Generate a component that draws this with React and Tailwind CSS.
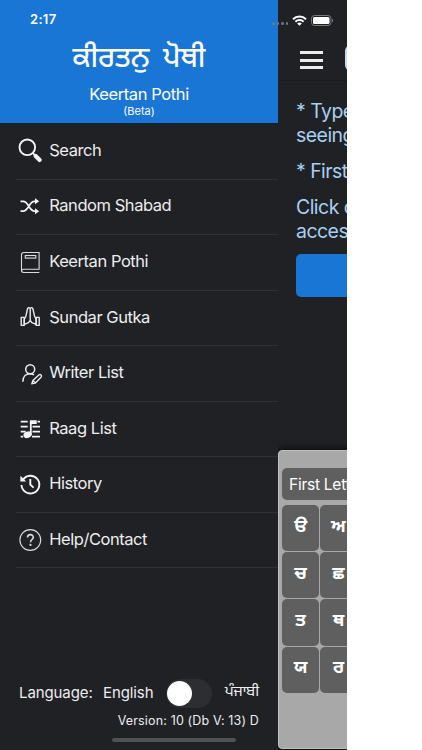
const GUR = "font-['Noto_Sans_Gurmukhi','Noto_Sans','Lohit_Gurmukhi',sans-serif]";

function SearchIcon() {
  return (
    <svg width="26" height="26" viewBox="0 0 26 26" fill="none" stroke="#f4f4f5">
      <circle cx="9.300" cy="9.300" r="7.800" strokeWidth="1.900" />
      <path d="M14.700 14.900l2.400 2.400" strokeWidth="1.800" />
      <path d="M17.600 17.900l4.100 4" strokeWidth="4.200" strokeLinecap="round" />
    </svg>
  );
}
function ShuffleIcon() {
  return (
    <svg width="26" height="26" viewBox="0 0 26 26" fill="none" stroke="#f4f4f5" strokeWidth="1.700">
      <path d="M2.500 8.300h2.600c5.600 0 5.800 9.800 11.400 9.800h1.500M2.500 18.100h2.600c5.600 0 5.800-9.800 11.400-9.800h1.500" />
      <path d="M17 5.200v6l4.200-3zM17 15.200v6l4.200-3z" fill="#f4f4f5" stroke="none" />
    </svg>
  );
}
function BookIcon() {
  return (
    <svg width="26" height="26" viewBox="0 0 26 26" fill="none" stroke="#dcdcde" strokeWidth="1.100">
      <path d="M21.300 23.500H5.800c-3 0-3-3.300 0-3.300h15.300V3.500H5.800c-1.500 0-2.300.8-2.300 2.200V22" />
      <rect x="7.300" y="6.500" width="10.500" height="2.600" />
    </svg>
  );
}
function PrayIcon() {
  return (
    <svg width="26" height="26" viewBox="0 0 26 26" fill="none" stroke="#ececee" strokeWidth="1.400" strokeLinejoin="round">
      <path d="M12.200 4.300c-1.600-1.500-2.600-.2-2.900 1.300L8 11.700l-1.700 3.600v5l4.200-1.600 1.700-2.300zM12.200 4.300c1.600-1.500 2.600-.2 2.900 1.300l1.300 6.100 1.700 3.600v5l-4.200-1.600-1.700-2.300z" />
      <rect x="3.200" y="13.400" width="3" height="8" />
      <rect x="18.200" y="13.400" width="3" height="8" />
    </svg>
  );
}
function WriterIcon() {
  return (
    <svg width="26" height="26" viewBox="0 0 26 26" fill="none" stroke="#ececee" strokeWidth="1.500" strokeLinecap="round" strokeLinejoin="round">
      <circle cx="12.200" cy="9.200" r="4.500" />
      <path d="M4.900 21.300c0-4.800 3-7.600 7-7.600 1.400 0 2.600.3 3.600.9" />
      <path d="M14.900 20.500l5.900-5.500c1.700-1.300 3.600.7 2.200 2.200l-5.600 5.700-3.600 1zM14.900 20.500l2.500 2.400" strokeWidth="1.400" />
    </svg>
  );
}
function RaagIcon() {
  return (
    <svg width="26" height="26" viewBox="0 0 26 26" fill="none" stroke="#f4f4f5" strokeWidth="1.700">
      <path d="M2.700 5.700h7M19.500 5.700h2.500M2.700 10.600h7M14.500 10.600h7.500M2.700 15.600h5M14.500 15.600h7.500M2.700 20.700h2.500M14 20.700h8" />
      <path d="M12.800 19V5.500" strokeWidth="1.800" />
      <path d="M11.900 4.200h6.800v3.700h-6.800z" fill="#f4f4f5" stroke="none" />
      <ellipse cx="9.600" cy="18.800" rx="4.200" ry="3.200" transform="rotate(-20 9.600 18.800)" fill="#f4f4f5" stroke="none" />
    </svg>
  );
}
function HistoryIcon() {
  return (
    <svg width="26" height="26" viewBox="0 0 26 26" fill="none" stroke="#f4f4f5" strokeWidth="1.900">
      <path d="M4.900 8.800A8.900 8.900 0 1 1 3.500 14" />
      <path d="M2.400 4.800v5.600h5.800z" fill="#f4f4f5" stroke="none" />
      <path d="M12.300 8v5.600l3.300 3" />
    </svg>
  );
}
function HelpIcon() {
  return (
    <svg width="26" height="26" viewBox="0 0 26 26" fill="none" stroke="#dcdcde">
      <circle cx="12.300" cy="13" r="10.400" strokeWidth="1.100" />
      <path d="M9.500 10.500c0-3.800 5.800-3.700 5.800-.2 0 2.200-2.800 2.300-2.800 4.900" strokeWidth="1.600" />
      <circle cx="12.500" cy="17.900" r="1.100" fill="#dcdcde" stroke="none" />
    </svg>
  );
}

const items = [
  ["Search", SearchIcon],
  ["Random Shabad", ShuffleIcon],
  ["Keertan Pothi", BookIcon],
  ["Sundar Gutka", PrayIcon],
  ["Writer List", WriterIcon],
  ["Raag List", RaagIcon],
  ["History", HistoryIcon],
  ["Help/Contact", HelpIcon],
];
const keys = ["ੳ", "ਅ", "ਚ", "ਛ", "ਤ", "ਥ", "ਯ", "ਰ"];

function StatusBar() {
  return (
    <div className="absolute left-0 top-0 flex h-10 w-[347px] items-center pl-[30px] pr-[13px]">
      <span className="text-[13px] font-semibold tracking-[0.300px] text-white">2:17</span>
      <div className="ml-auto flex items-center">
        <div className="mr-1 mt-[7px] flex gap-[2px]">
          {[0, 1, 2, 3].map((n) => (
            <span key={n} className="size-[2.500px] rounded-full bg-[#6f7887]" />
          ))}
        </div>
        <svg width="15" height="11" viewBox="0 0 15 11" fill="none" stroke="#fff" strokeWidth="1.900">
          <path d="M1 4.200a9.300 9.300 0 0 1 13 0M3.400 6.700a5.900 5.900 0 0 1 8.200 0" />
          <path d="M7.500 10.700L5.200 8.500a3.300 3.300 0 0 1 4.600 0z" fill="#fff" stroke="none" />
        </svg>
        <svg className="ml-1" width="23" height="11" viewBox="0 0 23 11">
          <rect x=".5" y=".5" width="19.500" height="10" rx="3" fill="none" stroke="#77787b" />
          <rect x="2" y="2" width="16.500" height="7" rx="1.500" fill="#fff" />
          <path d="M21 3.800c1.500.4 1.500 3 0 3.400z" fill="#77787b" />
        </svg>
      </div>
    </div>
  );
}

function Drawer() {
  return (
    <aside className="flex h-full w-[278px] shrink-0 flex-col bg-[#202125] text-[#ededee]">
      <header className="flex h-[124px] shrink-0 flex-col items-center border-b border-[#15202e] bg-[#1976d5] pt-[40px] text-white">
        <h1 className={`${GUR} h-[44px] whitespace-nowrap text-[28.500px] font-medium leading-[41px] [word-spacing:6px]`}>ਕੀਰਤਨੁ ਪੋਥੀ</h1>
        <div className="text-[16.500px] leading-[20px] tracking-[-0.400px]">Keertan Pothi</div>
        <div className="text-[11px] leading-[14px]">(Beta)</div>
      </header>
      <nav className="flex flex-col pl-4">
        {items.map(([label, Icon]) => (
          <div key={label} className="flex h-[55.550px] items-center gap-[6px] border-b border-[#303136] pb-px pl-[2px]">
            <span className="shrink-0"><Icon /></span>
            <span className="-ml-[0.800px] whitespace-nowrap pb-px text-[16.500px] tracking-[-0.450px]">{label}</span>
          </div>
        ))}
      </nav>
      <footer className="mt-auto flex h-[75px] shrink-0 flex-col pl-[19px] pr-[19px]">
        <div className="flex h-[36px] items-center whitespace-nowrap text-[15px] tracking-[-0.100px]">
          <span className="w-[84px]">Language:</span>
          <span className="w-[63px]">English</span>
          <span className="flex h-[29px] w-[46px] items-center rounded-full bg-[#2d2e31] px-[1px]">
            <span className="size-[25px] rounded-full bg-white" />
          </span>
          <span className={`${GUR} ml-auto text-[15px]`}>ਪੰਜਾਬੀ</span>
        </div>
        <div className="whitespace-nowrap pt-px text-right text-[12.500px] leading-[18px] tracking-[0.150px]">Version: 10 (Db V: 13) D</div>
      </footer>
    </aside>
  );
}

function MainPane() {
  return (
    <main className="flex h-full w-[69px] shrink-0 flex-col overflow-hidden bg-[#202125]">
      <div className="flex h-[81px] shrink-0 border-b border-[#1a1b1e] pl-[22px]">
        <div className="mt-[51px] flex w-[23px] shrink-0 flex-col gap-[4.500px]">
          <span className="h-[3px] bg-[#ececec]" />
          <span className="h-[3px] bg-[#ececec]" />
          <span className="h-[3px] bg-[#ececec]" />
        </div>
        <span className="ml-[22px] mt-[45px] h-[26px] w-[80px] shrink-0 rounded-md bg-[#c5dff5]" />
      </div>
      <div className="flex flex-col gap-[12px] whitespace-nowrap pl-[18px] pt-[18px] text-[19.500px] leading-[24px] tracking-[-0.550px] text-[#a9cff0]">
        <p>* Type any<br />seeing the</p>
        <p>* First letter</p>
        <p>Click on<br />access the</p>
      </div>
      <div className="ml-[18px] mt-[11px] h-[43px] w-[120px] shrink-0 rounded-[5px] bg-[#1976d5]" />
      <section className="mb-px mt-auto h-[299px] w-[140px] shrink-0 rounded-[4px] border border-[#c0c0c0] bg-[#a8a8a8] pl-[3px] pt-[17px] text-white shadow-[0_0_8px_#000]">
        <div className="mb-[5px] h-[32px] w-[120px] whitespace-nowrap rounded-[5px] bg-[#5f5f5f] pl-[7px] text-[15.500px] leading-[33px] tracking-[-0.250px]">First Letter</div>
        <div className="grid w-[75px] grid-cols-2 gap-px">
          {keys.map((k) => (
            <div key={k} className={`${GUR} flex h-[46.200px] items-center justify-center rounded-[5px] bg-[#5f5f5f] pb-[2px] text-[18px] font-bold`}>{k}</div>
          ))}
        </div>
      </section>
    </main>
  );
}

export default function App() {
  return (
    <div className="h-[750px] w-[422px] overflow-hidden bg-white font-['Inter',sans-serif]">
      <div className="relative flex h-full w-[347px] overflow-hidden bg-[#202125]">
        <Drawer />
        <MainPane />
        <StatusBar />
        <div className="absolute bottom-[8px] left-[112px] h-[4px] w-[124px] rounded-full bg-[#505154]" />
      </div>
    </div>
  );
}
